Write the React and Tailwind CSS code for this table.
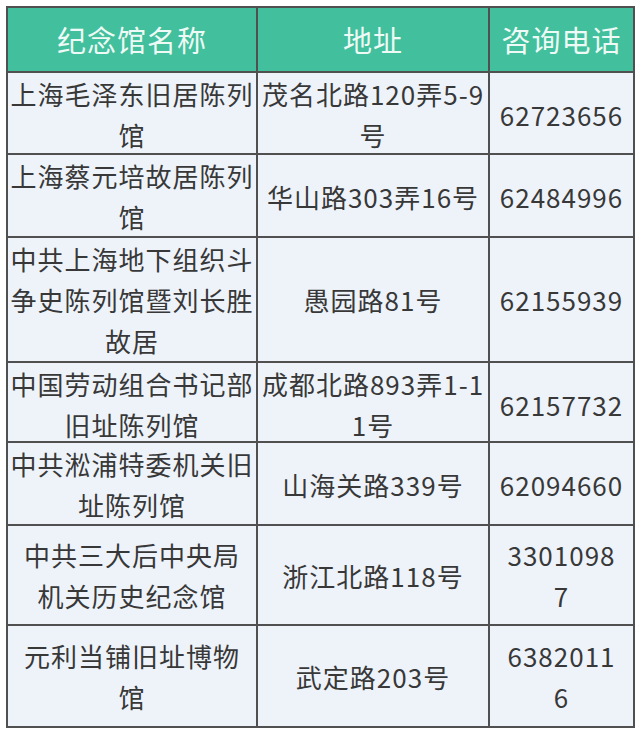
const rows = [
  { h: "h-[82px]", name: ["上海毛泽东旧居陈列", "馆"], addr: ["茂名北路120弄5-9", "号"], tel: ["62723656"] },
  { h: "h-[83px]", name: ["上海蔡元培故居陈列", "馆"], addr: ["华山路303弄16号"], tel: ["62484996"] },
  { h: "h-[125px]", name: ["中共上海地下组织斗", "争史陈列馆暨刘长胜", "故居"], addr: ["愚园路81号"], tel: ["62155939"] },
  { h: "h-[80px]", name: ["中国劳动组合书记部", "旧址陈列馆"], addr: ["成都北路893弄1-1", "1号"], tel: ["62157732"] },
  { h: "h-[83px]", name: ["中共淞浦特委机关旧", "址陈列馆"], addr: ["山海关路339号"], tel: ["62094660"] },
  { h: "h-[100px]", name: ["中共三大后中央局", "机关历史纪念馆"], addr: ["浙江北路118号"], tel: ["3301098", "7"] },
  { h: "h-[100px]", name: ["元利当铺旧址博物", "馆"], addr: ["武定路203号"], tel: ["6382011", "6"] },
];

function Cell({ lines, className }) {
  return (
    <div className={`flex flex-col items-center justify-center text-center ${className}`}>
      {lines.map((l, i) => (
        <span key={i} className="block whitespace-nowrap">{l}</span>
      ))}
    </div>
  );
}

export default function App() {
  return (
    <div
      className="w-[641px] h-[736px] bg-white pt-[6px] pl-[6px]"
      style={{ fontFamily: '"Noto Sans CJK SC", "Noto Sans", sans-serif' }}
    >
      <div className="w-[629px] border-2 border-[#505050] bg-[#eef3fa] text-[#383838] text-[26px] leading-[41px] tracking-[1px]">
        {/* HEADER */}
        <div className="grid grid-cols-[250px_232px_143px] h-[65px] bg-[#42bf9d] text-[#eefaf5] text-[29px] border-b-2 border-[#505050]">
          <div className="flex items-center justify-center border-r-2 border-[#505050]">纪念馆名称</div>
          <div className="flex items-center justify-center border-r-2 border-[#505050]">地址</div>
          <div className="flex items-center justify-center">咨询电话</div>
        </div>

        {rows.map((r, i) => (
          <div
            key={i}
            className={`grid grid-cols-[250px_232px_143px] ${r.h} ${i < rows.length - 1 ? "border-b-2 border-[#505050]" : ""}`}
          >
            <Cell lines={r.name} className="border-r-2 border-[#505050]" />
            <Cell lines={r.addr} className="border-r-2 border-[#505050]" />
            <Cell lines={r.tel} />
          </div>
        ))}
      </div>
    </div>
  );
}
